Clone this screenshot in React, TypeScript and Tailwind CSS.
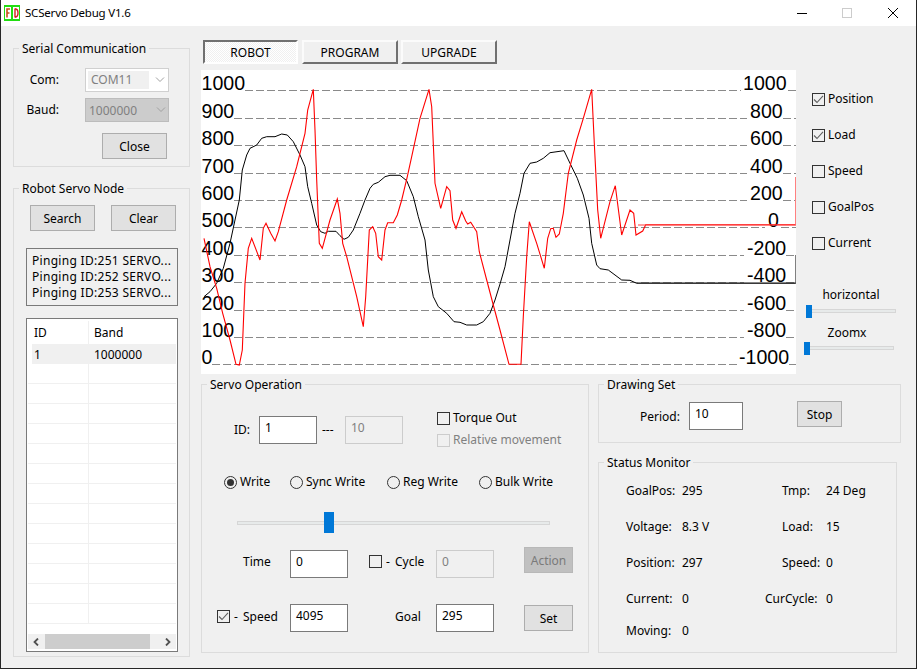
import React from "react";

const red3: number[][] = [[12,625],[30,710],[50,775],[68,850],[90,930],[108,1003],[118,1005],[127,960],[135,760],[145,655],[155,625],[180,690],[190,595],[198,580],[212,610],[225,633],[235,605],[260,510],[290,410],[315,310],[323,240],[340,178],[345,300],[350,450],[358,640],[367,655],[390,570],[412,507],[420,550],[428,640],[440,680],[470,800],[490,890],[497,800],[508,600],[518,590],[527,610],[535,680],[545,690],[555,600],[563,578],[580,578],[592,555],[605,510],[622,440],[635,380],[660,265],[687,178],[695,230],[705,460],[722,535],[740,470],[750,482],[758,570],[768,595],[785,545],[797,573],[803,582],[812,577],[830,605],[838,665],[860,750],[880,825]];
const red4: number[][] = [[0,900],[27,1003],[63,1003],[70,860],[80,680],[88,575],[110,640],[133,715],[143,625],[152,596],[160,595],[168,622],[178,612],[190,550],[205,430],[230,330],[250,265],[275,178],[283,340],[293,540],[302,625],[330,515],[346,467],[365,615],[390,540],[401,550],[408,615],[428,603],[437,584],[887,584]];
const black3: number[][] = [[12,800],[30,785],[50,760],[70,715],[90,640],[105,570],[118,510],[127,420],[140,375],[150,355],[170,345],[185,325],[200,320],[225,320],[245,312],[262,315],[280,335],[300,375],[315,410],[323,470],[335,520],[350,585],[362,605],[375,610],[385,604],[408,604],[420,617],[432,628],[445,622],[460,600],[480,550],[495,510],[510,475],[520,463],[535,457],[555,440],[570,436],[600,436],[620,452],[640,500],[655,560],[675,630],[685,720],[700,800],[715,830],[740,850],[762,875],[780,877],[800,885],[830,885],[850,875],[870,850],[885,810]];
const black4: number[][] = [[0,762],[15,710],[30,630],[45,550],[60,490],[72,430],[90,400],[110,396],[130,385],[150,368],[192,362],[210,400],[232,445],[250,495],[267,565],[275,640],[290,705],[300,716],[325,720],[345,735],[365,750],[390,751],[410,760],[887,760]];

// zoom coordinates to chart-local pixels
const pts = (a: number[][], x0: number) => a.map(([x, y]) => `${(x0 + x / 3 - 201).toFixed(1)},${(30 + y / 3 - 70).toFixed(1)}`).join(" ");
const redLine = pts(red3, 200) + " " + pts(red4, 500);
const blackLine = pts(black3, 200) + " " + pts(black4, 500);

const FONT = "font-['Noto_Sans',sans-serif]";

const grid = [
  { y: 20, l: "1000", r: "1000", lx: 0.5, ls: 44, rs: 540, re: 587, rx: 542 },
  { y: 48, l: "900", r: "800", lx: 0.5, ls: 33, rs: 546, re: 582, rx: 549 },
  { y: 75, l: "800", r: "600", lx: 0.5, ls: 33, rs: 546, re: 582, rx: 549 },
  { y: 103, l: "700", r: "400", lx: 0.5, ls: 33, rs: 546, re: 582, rx: 549 },
  { y: 130, l: "600", r: "200", lx: 0.5, ls: 33, rs: 546, re: 582, rx: 549 },
  { y: 157, l: "500", r: "0", lx: 0.5, ls: 33, rs: 564, re: 580, rx: 567 },
  { y: 185, l: "400", r: "-200", lx: 0.5, ls: 33, rs: 543, re: 585, rx: 546 },
  { y: 212, l: "300", r: "-400", lx: 0.5, ls: 33, rs: 543, re: 585, rx: 546 },
  { y: 240, l: "200", r: "-600", lx: 0.5, ls: 33, rs: 543, re: 585, rx: 546 },
  { y: 267, l: "100", r: "-800", lx: 0.5, ls: 33, rs: 543, re: 585, rx: 546 },
  { y: 294, l: "0", r: "-1000", lx: 0.5, ls: 11, rs: 536, re: 588, rx: 538 },
];

function Chart() {
  return (
    <svg width="595" height="304" className="block bg-white shrink-0">
      {grid.map((g) => (
        <g key={g.y} stroke="#8a8a8a" strokeWidth="1" strokeDasharray="8 3" fill="none">
          <line x1={g.ls} y1={g.y + 0.5} x2={g.rs} y2={g.y + 0.5} />
          <line x1={g.re} y1={g.y + 0.5} x2={595} y2={g.y + 0.5} />
        </g>
      ))}
      {grid.map((g) => (
        <g key={g.y} fontFamily="'Liberation Sans', Arial, sans-serif" fontSize="19.6" fill="#000">
          <text x={g.lx} y={g.y}>{g.l}</text>
          <text x={g.rx} y={g.y}>{g.r}</text>
        </g>
      ))}
      <polyline points={blackLine} fill="none" stroke="#000" strokeWidth="1" />
      <polyline points={redLine} fill="none" stroke="#ff0000" strokeWidth="1.1" />
      <line x1="594.5" y1="107" x2="594.5" y2="155" stroke="#ff8080" />
      <line x1="594.5" y1="185" x2="594.5" y2="213" stroke="#808080" />
      <line x1="437" y1="155" x2="595" y2="155" stroke="#ff4040" />
      <line x1="437" y1="213" x2="595" y2="213" stroke="#404040" />
    </svg>
  );
}

function Check({ on, disabled }: { on?: boolean; disabled?: boolean }) {
  return (
    <span className={`w-[13px] h-[13px] shrink-0 border flex items-center justify-center ${disabled ? "border-[#cccccc] bg-[#f0f0f0]" : "border-[#333333] bg-[#f0f0f0]"}`}>
      {on && (
        <svg width="11" height="11" viewBox="0 0 11 11" fill="none" stroke="#606060" strokeWidth="1.1">
          <path d="M1 5.5 L4 8.5 L10 1.8" />
        </svg>
      )}
    </span>
  );
}

function Radio({ on }: { on?: boolean }) {
  return (
    <span className="w-[13px] h-[13px] shrink-0 rounded-full border border-[#333333] flex items-center justify-center">
      {on && <span className="w-[7px] h-[7px] rounded-full bg-[#333333]" />}
    </span>
  );
}

function Btn({ w, children, disabled }: { w: string; children: React.ReactNode; disabled?: boolean }) {
  return (
    <div className={`${w} h-[26px] shrink-0 flex items-center justify-center border pt-[2px] ${disabled ? "bg-[#c0c0c0] border-[#b8b8b8] text-[#7a7a7a]" : "bg-[#e1e1e1] border-[#adadad]"}`}>
      {children}
    </div>
  );
}

function Field({ value, disabled, w = "w-[58px]" }: { value: string; disabled?: boolean; w?: string }) {
  return (
    <div className={`${w} h-[28px] shrink-0 border pl-[5px] pt-[2px] leading-[18px] ${disabled ? "border-[#cccccc] text-[#808080] bg-[#f0f0f0]" : "border-[#7a7a7a] bg-white"}`}>
      {value}
    </div>
  );
}

function Slider({ thumb, track }: { thumb: string; track: string }) {
  return (
    <div className={`relative flex items-center ${track}`}>
      <div className="w-full h-[4px] bg-[#e7eaea] border border-[#d6d6d6]" />
      <span className={`absolute bg-[#0078d7] ${thumb}`} />
    </div>
  );
}

function Group({ title, className = "", children }: { title: string; className?: string; children: React.ReactNode }) {
  return (
    <fieldset className={`border border-[#dcdcdc] block min-w-0 shrink-0 ${className}`}>
      <legend className="ml-[5px] px-[3px] leading-[18px] h-[16px]">{title}</legend>
      {children}
    </fieldset>
  );
}

function StatusRow({ a, av, b, bv, bw, h }: { a: string; av: string; b?: string; bv?: string; bw?: string; h: string }) {
  return (
    <div className={`flex items-center ${h}`}>
      <span className="ml-[27px] w-[56px] shrink-0">{a}</span>
      <span className="w-[100px] shrink-0">{av}</span>
      {b && <span className={`${bw} shrink-0`}>{b}</span>}
      {bv && <span>{bv}</span>}
    </div>
  );
}

export default function App() {
  const rows = Array.from({ length: 13 });
  return (
    <div className={`w-[917px] h-[669px] bg-[#f0f0f0] text-[12px] text-black overflow-hidden border-x border-b border-[#262626] flex flex-col ${FONT}`}>
      <div className="h-[26px] bg-white flex items-center shrink-0">
        <svg width="16" height="16" viewBox="0 0 16 16" className="ml-[3px] shrink-0">
          <rect width="16" height="16" fill="#22dd11" />
          <rect x="1" y="2" width="6" height="12" fill="#fff" />
          <rect x="9" y="2" width="6" height="12" fill="#fff" />
          <path d="M3 12.5 V4 H6 M3 8 H5.5" stroke="#c8501c" strokeWidth="1.6" fill="none" />
          <path d="M11 3.5 V12.5 M11 3.8 Q14 4 14 8 Q14 12 11 12.2" stroke="#d42020" strokeWidth="1.4" fill="none" />
        </svg>
        <span className="ml-[5px] text-[11.5px] tracking-[-0.2px]">SCServo Debug V1.6</span>
        <svg width="10" height="10" viewBox="0 0 10 10" className="ml-auto mr-[35px] shrink-0"><path d="M0 5.5 H10" stroke="#000" /></svg>
        <span className="w-[10px] h-[10px] border border-[#cccccc] mr-[36px] shrink-0" />
        <svg width="10" height="10" viewBox="0 0 10 10" className="mr-[18px] shrink-0"><path d="M0 0 L10 10 M10 0 L0 10" stroke="#000" /></svg>
      </div>

      <div className="flex pl-[12px] pt-[14px]">
        {/* left column */}
        <div className="w-[177px] shrink-0 flex flex-col gap-[13px]">
          <Group title="Serial Communication" className="h-[127px]">
            <div className="flex items-center mt-[12px]">
              <span className="w-[45px] text-right">Com:</span>
              <div className="ml-[26px] w-[84px] h-[24px] border border-[#d0d0d0] bg-white flex items-center text-[#808080]">
                <span className="ml-[2px] pl-[3px] w-[61px] h-[18px] leading-[18px] bg-[#f0f0f0]">COM11</span>
                <svg width="10" height="6" viewBox="0 0 10 6" className="ml-[6px]"><path d="M1 .5 L5 4.5 L9 .5" stroke="#a0a0a0" fill="none" /></svg>
              </div>
            </div>
            <div className="flex items-center mt-[6px]">
              <span className="w-[45px] text-right">Baud:</span>
              <div className="ml-[26px] w-[84px] h-[24px] border border-[#bcbcbc] bg-[#cccccc] flex items-center text-[#808080]">
                <span className="ml-[3px] w-[62px] pt-[1px]">1000000</span>
                <svg width="10" height="6" viewBox="0 0 10 6" className="ml-[5px]"><path d="M1 .5 L5 4.5 L9 .5" stroke="#a0a0a0" fill="none" /></svg>
              </div>
            </div>
            <div className="flex justify-end mt-[11px] pr-[22px]"><Btn w="w-[65px]">Close</Btn></div>
          </Group>

          <Group title="Robot Servo Node" className="h-[477px]">
            <div className="flex gap-[16px] pl-[16px] mt-[9px]">
              <Btn w="w-[65px]">Search</Btn>
              <Btn w="w-[65px]">Clear</Btn>
            </div>
            <div className="ml-[12px] mt-[17px] w-[152px] h-[58px] border border-[#7a7a7a] pl-[5px] pt-[4px] leading-[16px] tracking-[0.3px] whitespace-nowrap overflow-hidden">
              <div>Pinging ID:251 SERVO...</div>
              <div>Pinging ID:252 SERVO...</div>
              <div>Pinging ID:253 SERVO...</div>
            </div>
            <div className="ml-[12px] mt-[12px] w-[152px] h-[334px] border border-[#7a7a7a] bg-white p-[1px] flex flex-col">
              <div className="flex h-[24px] shrink-0 items-center pt-[1px]">
                <span className="w-[61px] pl-[6px] border-r border-[#f0f0f0] h-full flex items-center">ID</span>
                <span className="pl-[5px]">Band</span>
              </div>
              <div className="flex h-[20px] shrink-0 items-center bg-[#f0f0f0] ml-[4px] pt-[1px]">
                <span className="w-[62px] pl-[2px]">1</span>
                <span>1000000</span>
              </div>
              <div className="flex-1 overflow-hidden">
                {rows.map((_, i) => (
                  <div key={i} className="h-[20px] border-b border-[#f0f0f0] flex">
                    <span className="w-[61px] border-r border-[#f0f0f0]" />
                  </div>
                ))}
              </div>
              <div className="h-[15px] shrink-0 mb-[1px] bg-[#f0f0f0] flex items-center">
                <svg width="6" height="8" viewBox="0 0 6 8" className="ml-[5px] shrink-0"><path d="M5 .5 L1.5 4 L5 7.5" stroke="#505050" strokeWidth="1.8" fill="none" /></svg>
                <span className="ml-[6px] w-[105px] h-full bg-[#cdcdcd] shrink-0" />
                <svg width="6" height="8" viewBox="0 0 6 8" className="ml-[15px] shrink-0"><path d="M1 .5 L4.5 4 L1 7.5" stroke="#505050" strokeWidth="1.8" fill="none" /></svg>
              </div>
            </div>
          </Group>
        </div>

        {/* right area */}
        <div className="ml-[11px] flex flex-col w-[700px] shrink-0">
          <div className="flex">
            <div className="flex flex-col">
              <div className="flex h-[24px] ml-[2px]">
                <div className="w-[95px] h-[24px] pt-[1px] border-2 border-t-[#707070] border-l-[#707070] border-r-[#ffffff] border-b-[#ffffff] flex items-center justify-center bg-[repeating-conic-gradient(#f0f0f0_0_25%,#ffffff_0_50%)] bg-[length:2px_2px]">ROBOT</div>
                <div className="ml-[4px] w-[96px] h-[24px] pt-[1px] border-2 border-t-[#fbfbfb] border-l-[#fbfbfb] border-r-[#707070] border-b-[#707070] flex items-center justify-center">PROGRAM</div>
                <div className="ml-[3px] w-[96px] h-[24px] pt-[1px] border-2 border-t-[#fbfbfb] border-l-[#fbfbfb] border-r-[#707070] border-b-[#707070] flex items-center justify-center">UPGRADE</div>
              </div>
              <div className="mt-[6px]"><Chart /></div>
            </div>
            <div className="flex flex-col pt-[51px]">
              {["Position", "Load", "Speed", "GoalPos", "Current"].map((t, i) => (
                <div key={t} className="flex items-center gap-[3px] ml-[16px] h-[16px] mb-[20px]">
                  <Check on={i < 2} />
                  <span>{t}</span>
                </div>
              ))}
              <div className="text-center ml-[10px] w-[90px] leading-[16px] mt-[16px]">horizontal</div>
              <Slider track="ml-[10px] w-[90px] h-[14px] mt-[1px]" thumb="left-0 w-[6px] h-[13px]" />
              <div className="text-center ml-[8px] w-[86px] leading-[16px] mt-[7px]">Zoomx</div>
              <Slider track="ml-[8px] w-[90px] h-[14px]" thumb="left-0 w-[6px] h-[13px]" />
            </div>
          </div>

          <div className="flex mt-[2px] -mb-[2px]">
            <Group title="Servo Operation" className="w-[388px] h-[277px]">
              <div className="flex mt-[24px] h-[42px]">
                <span className="ml-[32px] w-[25px] h-[28px] leading-[28px]">ID:</span>
                <Field value="1" />
                <span className="ml-[5px] w-[23px] h-[28px] leading-[28px]">---</span>
                <Field value="10" disabled />
                <div className="ml-[34px] -mt-[6px] flex flex-col">
                  <div className="flex items-center gap-[3px] h-[16px]"><Check /><span>Torque Out</span></div>
                  <div className="flex items-center gap-[3px] h-[16px] mt-[6px] text-[#808080]"><Check disabled /><span>Relative movement</span></div>
                </div>
              </div>
              <div className="flex items-center h-[16px] mt-[16px]">
                <div className="ml-[22px] w-[66px] flex items-center gap-[3px]"><Radio on /><span>Write</span></div>
                <div className="w-[97px] flex items-center gap-[3px]"><Radio /><span>Sync Write</span></div>
                <div className="w-[92px] flex items-center gap-[3px]"><Radio /><span>Reg Write</span></div>
                <div className="flex items-center gap-[3px]"><Radio /><span>Bulk Write</span></div>
              </div>
              <Slider track="ml-[35px] w-[313px] h-[21px] mt-[22px]" thumb="left-[87px] w-[10px] h-[21px]" />
              <div className="flex items-center h-[28px] mt-[17px]">
                <span className="ml-[41px] w-[47px] -mt-[4px]">Time</span>
                <Field value="0" />
                <span className="ml-[21px] -mt-[6px]"><Check /></span>
                <span className="ml-[4px] w-[9px] -mt-[4px]">-</span>
                <span className="w-[41px] -mt-[4px]">Cycle</span>
                <Field value="0" disabled />
                <div className="ml-[30px] -mt-[8px]"><Btn w="w-[49px]" disabled>Action</Btn></div>
              </div>
              <div className="flex items-center h-[28px] mt-[26px]">
                <span className="ml-[15px] -mt-[4px]"><Check on /></span>
                <span className="ml-[4px] w-[9px] -mt-[2px]">-</span>
                <span className="w-[47px] -mt-[2px]">Speed</span>
                <Field value="4095" />
                <span className="ml-[47px] w-[41px] -mt-[2px]">Goal</span>
                <Field value="295" />
                <div className="ml-[30px]"><Btn w="w-[49px]">Set</Btn></div>
              </div>
            </Group>

            <div className="ml-[9px] flex flex-col gap-[11px]">
              <Group title="Drawing Set" className="w-[303px] h-[67px]">
                <div className="flex items-start mt-[10px]">
                  <span className="ml-[41px] w-[49px] h-[28px] leading-[30px]">Period:</span>
                  <Field value="10" w="w-[54px]" />
                  <div className="ml-[54px] -mt-[1px]"><Btn w="w-[45px]">Stop</Btn></div>
                </div>
              </Group>
              <Group title="Status Monitor" className="w-[299px] h-[199px]">
                <div className="mt-[3px]">
                  <StatusRow h="h-[36px]" a="GoalPos:" av="295" b="Tmp:" bv="24 Deg" bw="w-[44px]" />
                  <StatusRow h="h-[36px]" a="Voltage:" av="8.3 V" b="Load:" bv="15" bw="w-[44px]" />
                  <StatusRow h="h-[36px]" a="Position:" av="297" b="Speed:" bv="0" bw="w-[44px]" />
                  <div className="flex items-center h-[36px]">
                    <span className="ml-[27px] w-[56px] shrink-0">Current:</span>
                    <span className="w-[83px] shrink-0">0</span>
                    <span className="w-[61px] shrink-0">CurCycle:</span>
                    <span>0</span>
                  </div>
                  <StatusRow h="h-[28px]" a="Moving:" av="0" />
                </div>
              </Group>
            </div>
          </div>
        </div>
      </div>
    </div>
  );
}
